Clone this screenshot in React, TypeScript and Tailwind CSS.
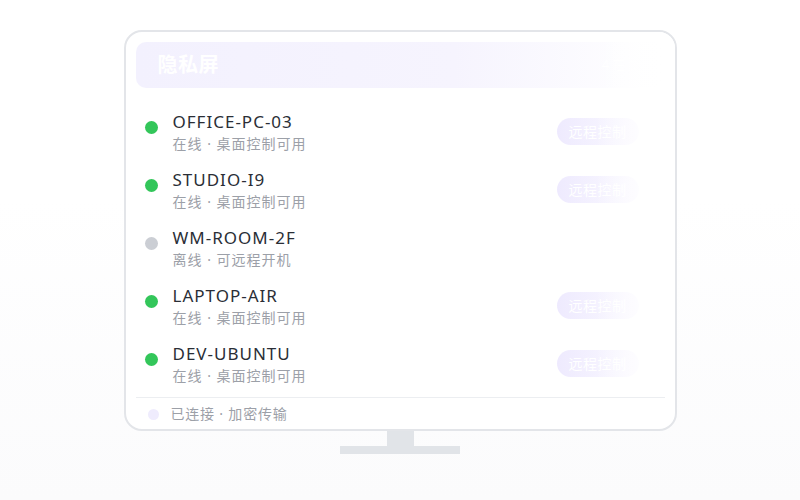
import React from "react";

const devices = [
  { name: "OFFICE-PC-03", online: true },
  { name: "STUDIO-I9", online: true },
  { name: "WM-ROOM-2F", online: false },
  { name: "LAPTOP-AIR", online: true },
  { name: "DEV-UBUNTU", online: true },
];

export default function App() {
  return (
    <div
      className="w-[800px] h-[500px] bg-gradient-to-b from-white from-40% to-[#fbfbfc] flex flex-col items-center pt-[30px]"
      style={{ fontFamily: '"Noto Sans", "Noto Sans CJK SC", sans-serif' }}
    >
      <div className="relative w-[553px] h-[401px] border-2 border-[#e3e5e9] rounded-[18px] bg-white p-[10px] flex flex-col overflow-hidden">
        <div className="h-[46px] shrink-0 rounded-[10px] bg-gradient-to-r from-[#f3f1fe] via-[#f6f4fe] via-60% to-white flex items-center justify-between px-[22px]">
          <span className="text-white font-bold text-[20px] leading-none tracking-[0.5px]">隐私屏</span>
          <span className="text-white text-[13px] mr-[4px]">4 在线</span>
        </div>
        <div className="flex flex-col mt-[15px]">
          {devices.map((d) => (
            <div key={d.name} className="h-[58px] flex items-start pt-[8px] pl-[9px] pr-[26px]">
              <div
                className={`w-[13px] h-[13px] rounded-full mt-[10px] shrink-0 ${
                  d.online ? "bg-[#33c65a]" : "bg-[#cbced4]"
                }`}
              />
              <div className="ml-[15px] flex flex-col flex-1">
                <span className="text-[17px] leading-[22px] text-[#2a2e36] tracking-[1px]">{d.name}</span>
                <span className="text-[14px] leading-[20px] text-[#9ca0a8] mt-[1px] tracking-[1px]">
                  {d.online ? "在线 · 桌面控制可用" : "离线 · 可远程开机"}
                </span>
              </div>
              {d.online && (
                <div className="mt-[7px] h-[27px] rounded-full bg-gradient-to-r from-[#eeeafe] to-[#fbfaff] px-[12px] flex items-center text-white text-[14px] tracking-[0.5px]">
                  远程控制
                </div>
              )}
            </div>
          ))}
        </div>
        <div className="mt-[4px] border-t border-[#eceef1] pt-[6px] flex items-center pl-[12px]">
          <div className="w-[11px] h-[11px] rounded-full bg-[#efecfd]" />
          <span className="ml-[12px] text-[14px] leading-[20px] text-[#9ca0a8] tracking-[0.8px]">已连接 · 加密传输</span>
        </div>
        <div className="absolute top-0 bottom-[40px] right-0 w-[80px] bg-gradient-to-r from-white/0 to-white to-85% pointer-events-none" />
      </div>
      <div className="w-[27px] h-[15px] bg-[#e1e4e8]" />
      <div className="w-[120px] h-[8px] bg-[#e1e4e8]" />
    </div>
  );
}
